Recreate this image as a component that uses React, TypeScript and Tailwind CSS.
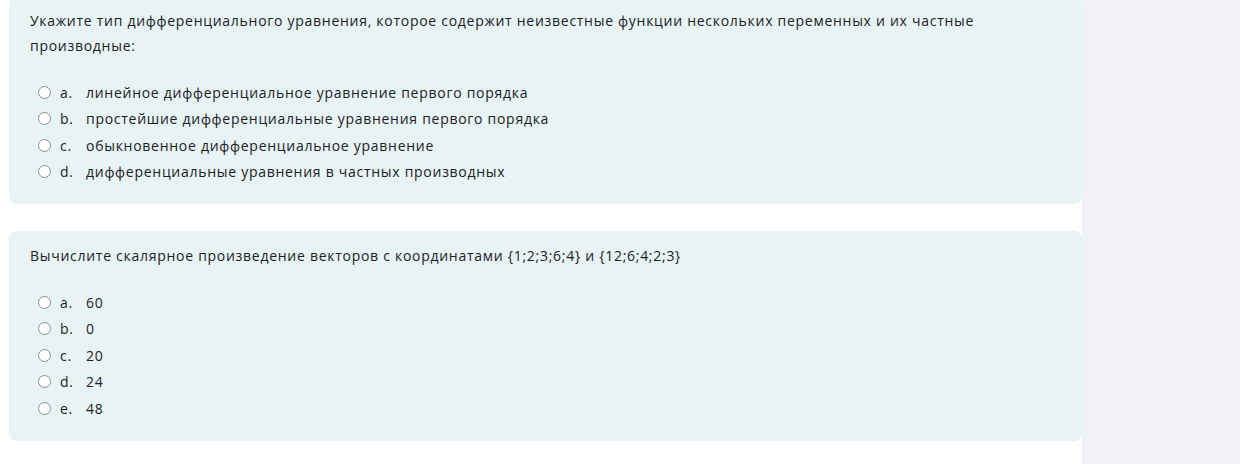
const questions = [
  {
    text: "Укажите тип дифференциального уравнения, которое содержит неизвестные функции нескольких переменных и их частные производные:",
    answers: [
      ["a.", "линейное дифференциальное уравнение первого порядка"],
      ["b.", "простейшие дифференциальные уравнения первого порядка"],
      ["c.", "обыкновенное дифференциальное уравнение"],
      ["d.", "дифференциальные уравнения в частных производных"],
    ],
  },
  {
    text: "Вычислите скалярное произведение векторов с координатами {1;2;3;6;4} и {12;6;4;2;3}",
    answers: [
      ["a.", "60"],
      ["b.", "0"],
      ["c.", "20"],
      ["d.", "24"],
      ["e.", "48"],
    ],
  },
];

function Radio() {
  return (
    <span className="w-[13px] h-[13px] rounded-full border border-[#8a8d91] bg-white shrink-0" />
  );
}

export default function App() {
  return (
    <div
      className="flex w-[1240px] h-[464px] overflow-hidden bg-white text-[#1d2125]"
      style={{ fontFamily: '"Open Sans", "Liberation Sans", sans-serif' }}
    >
      <div className="flex flex-col gap-[27px] pl-[9px] w-[1082px] -mt-1">
        {questions.map((q, i) => (
          <div key={i} className="bg-[#e7f3f5] rounded-lg pl-[21px] pr-6 pt-[12px] pb-[19px]">
            <p className="text-[14px] leading-[25px] font-medium tracking-[0.72px] max-w-[980px]">{q.text}</p>
            <div className="mt-[21px] flex flex-col pl-2">
              {q.answers.map(([l, t]) => (
                <div key={l} className="flex items-center h-[26.5px] text-[14px] font-medium tracking-[0.72px]">
                  <Radio />
                  <span className="ml-[9px] w-[26px]">{l}</span>
                  <span>{t}</span>
                </div>
              ))}
            </div>
          </div>
        ))}
      </div>
      <div className="flex-1 bg-[#f0f2f6]" />
    </div>
  );
}
